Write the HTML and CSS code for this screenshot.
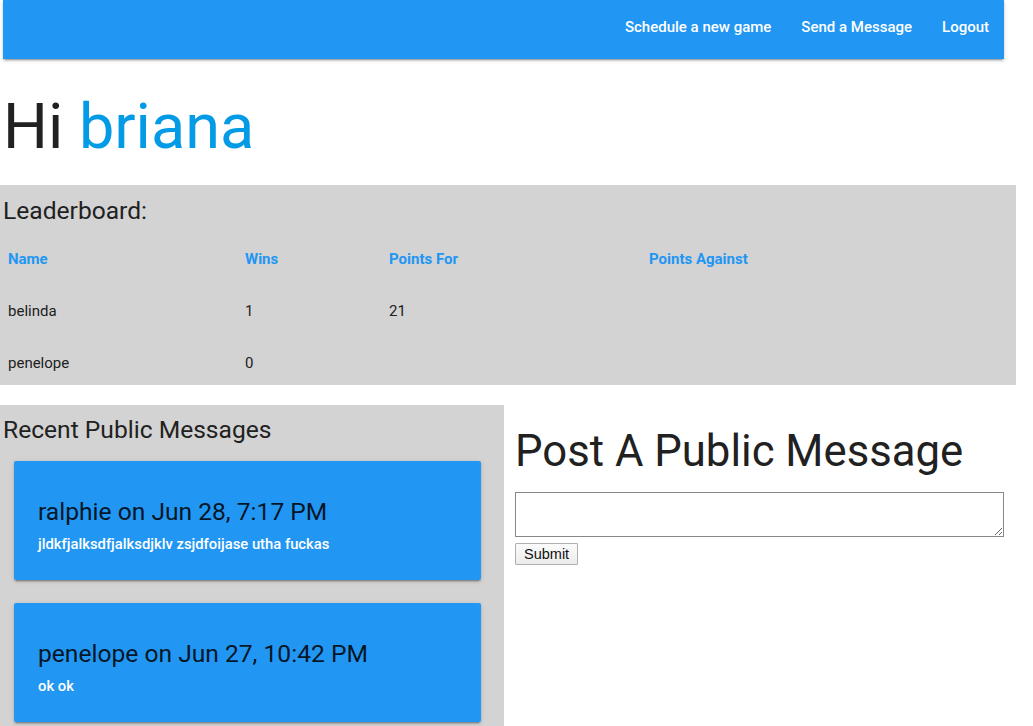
FILE: index.html
```html
<!DOCTYPE html>
<html lang="en">
<head>
<meta charset="utf-8">
<title>Dashboard</title>
<link rel="stylesheet" href="styles.css">
</head>
<body>
<div class="page">
  <nav class="navbar">
    <ul class="nav-links">
      <li><a href="#">Schedule a new game</a></li>
      <li><a href="#">Send a Message</a></li>
      <li><a href="#">Logout</a></li>
    </ul>
  </nav>

  <h1 class="greeting">Hi <span class="username">briana</span></h1>

  <section class="leaderboard">
    <h5 class="section-title">Leaderboard:</h5>
    <table class="board">
      <thead>
        <tr>
          <th class="col-name">Name</th>
          <th class="col-wins">Wins</th>
          <th class="col-for">Points For</th>
          <th class="col-against">Points Against</th>
        </tr>
      </thead>
      <tbody>
        <tr><td>belinda</td><td>1</td><td>21</td><td></td></tr>
        <tr><td>penelope</td><td>0</td><td></td><td></td></tr>
      </tbody>
    </table>
  </section>

  <div class="bottom">
    <section class="messages">
      <h5 class="section-title">Recent Public Messages</h5>
      <div class="card">
        <div class="card-title">ralphie on Jun 28, 7:17 PM</div>
        <p class="card-body">jldkfjalksdfjalksdjklv zsjdfoijase utha fuckas</p>
      </div>
      <div class="card">
        <div class="card-title">penelope on Jun 27, 10:42 PM</div>
        <p class="card-body">ok ok</p>
      </div>
    </section>
    <section class="post">
      <h3 class="post-title">Post A Public Message</h3>
      <form class="post-form">
        <textarea class="post-text"></textarea>
        <button type="button" class="submit">Submit</button>
      </form>
    </section>
  </div>
</div>
</body>
</html>
```

FILE: styles.css
```css
html, body {
  margin: 0;
  padding: 0;
  background: #fff;
}
body {
  font-family: Roboto, "Liberation Sans", sans-serif;
  color: rgba(0, 0, 0, 0.87);
  font-size: 15px;
  line-height: 1.5;
  overflow: hidden;
}
.page {
  width: 1016px;
}
.navbar {
  margin: 0 12px 0 3px;
  height: 59px;
  background: #2196f3;
  box-shadow: 0 2px 2px 0 rgba(0,0,0,0.14), 0 1px 5px 0 rgba(0,0,0,0.12), 0 3px 1px -2px rgba(0,0,0,0.2);
  display: flex;
  justify-content: flex-end;
  align-items: flex-start;
}
.nav-links {
  list-style: none;
  margin: 0;
  padding: 0;
  display: flex;
}
.nav-links a {
  display: block;
  padding: 0 15px;
  color: #fff;
  text-decoration: none;
  font-size: 15px;
  font-weight: 500;
  line-height: 55px;
}
.greeting {
  margin: 33px 0 24px 3px;
  font-size: 63px;
  font-weight: 400;
  line-height: 69px;
  color: #212121;
}
.username {
  color: #039be5;
}
.leaderboard {
  background: #d3d3d3;
  height: 200px;
  overflow: hidden;
  padding: 10px 0 0 3px;
  box-sizing: border-box;
}
.section-title {
  margin: 0;
  font-size: 24.6px;
  font-weight: 400;
  line-height: 32px;
  color: #212121;
}
.board {
  margin-top: 6px;
  border-collapse: collapse;
  width: 760px;
}
.board th, .board td {
  padding: 15px 5px;
  height: 22px;
  text-align: left;
  vertical-align: middle;
  font-size: 15px;
  line-height: 22px;
}
.board th {
  color: #2196f3;
  font-weight: 700;
}
.board td {
  color: #212121;
}
.col-name { width: 227px; }
.col-wins { width: 134px; }
.col-for { width: 250px; }
.bottom {
  margin-top: 20px;
  display: flex;
  align-items: flex-start;
}
.messages {
  width: 504px;
  box-sizing: border-box;
  background: #d3d3d3;
  padding: 9px 23px 10px 3px;
  min-height: 330px;
}
.card {
  margin: 15px 0 23px 11px;
  background: #2196f3;
  border-radius: 2px;
  box-shadow: 0 2px 2px 0 rgba(0,0,0,0.14), 0 1px 5px 0 rgba(0,0,0,0.12), 0 3px 1px -2px rgba(0,0,0,0.2);
  padding: 35px 24px 20px;
  height: 119px;
  box-sizing: border-box;
}
.card-title {
  font-size: 24.6px;
  line-height: 32px;
  color: rgba(0,0,0,0.87);
}
.card-body {
  margin: 6px 0 0;
  color: #fff;
  font-size: 14.8px;
  font-weight: 500;
  line-height: 21px;
}
.post {
  flex: 1;
  padding: 0 12px 0 11px;
}
.post-title {
  margin: 22px 0 0;
  font-size: 43.7px;
  font-weight: 400;
  line-height: 48px;
  color: #212121;
}
.post-form {
  margin-top: 17px;
  display: flex;
  flex-direction: column;
  align-items: flex-start;
}
.post-text {
  width: 489px;
  height: 45px;
  box-sizing: border-box;
  border: 1px solid #888;
  resize: vertical;
  margin: 0;
  padding: 2px;
  font-family: "Liberation Mono", monospace;
}
.submit {
  margin-top: 6px;
  height: 22px;
  padding: 0 8px;
  font-family: "Liberation Sans", Arial, sans-serif;
  font-size: 14.5px;
  color: #111;
  background: linear-gradient(#fbfbfb, #ececec);
  border: 1px solid #b0b0b0;
  border-radius: 1px;
}
```
